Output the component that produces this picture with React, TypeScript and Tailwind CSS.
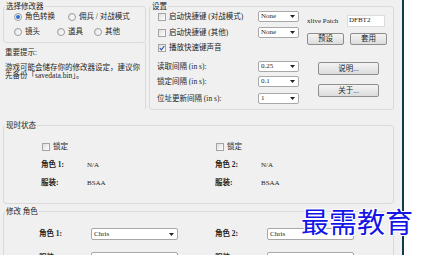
import React from "react";

const Radio = ({ on }: { on?: boolean }) => (
  <span className="w-[8px] h-[8px] rounded-full border border-[#9a9a9a] bg-gradient-to-br from-[#e4e4e4] to-white flex items-center justify-center shrink-0">
    {on && <span className="w-[4px] h-[4px] rounded-full bg-[#2f6fcf]" />}
  </span>
);

const Check = ({ on }: { on?: boolean }) => (
  <span className="w-[8px] h-[8px] border border-[#a4a4a4] bg-gradient-to-br from-[#dedede] to-white flex items-center justify-center shrink-0">
    {on && (
      <svg width="6" height="6" viewBox="0 0 6 6">
        <path d="M0.8 3.2 L2.4 4.8 L5.3 1" stroke="#2a4fa8" strokeWidth="1.1" fill="none" />
      </svg>
    )}
  </span>
);

const Select = ({ value, className }: { value: string; className: string }) => (
  <div className={`h-[11px] bg-white border border-[#a8a8a8] rounded-[2px] flex items-center justify-between pl-[2px] pr-[3px] shrink-0 ${className}`}>
    <span className="text-[7px] leading-none">{value}</span>
    <svg width="5" height="3" viewBox="0 0 5 3">
      <path d="M0 0 H5 L2.5 3 Z" fill="#222" />
    </svg>
  </div>
);

const Btn = ({ children, className }: { children: React.ReactNode; className: string }) => (
  <div className={`border border-[#8e8e8e] rounded-[2px] bg-gradient-to-b from-[#f4f4f4] to-[#dcdcdc] flex items-center justify-center leading-none ${className}`}>
    {children}
  </div>
);

const Group = ({
  title,
  className,
  children,
}: {
  title: string;
  className: string;
  children: React.ReactNode;
}) => (
  <fieldset className={`border border-[#dadada] rounded-[3px] shrink-0 ${className}`}>
    <legend className="ml-[1px] px-[1px] text-[7.5px] leading-[9px]">{title}</legend>
    {children}
  </fieldset>
);

export default function App() {
  return (
    <div className="w-[423px] h-[255px] flex bg-white overflow-hidden relative font-['Liberation_Serif','Noto_Sans_CJK_SC',serif] text-[#1e1e1e] text-[7.5px]">
      <div className="w-[404px] h-full shrink-0 bg-[#f0f0f0] border-r-[2px] border-[#123a4a] pl-[3px] pr-[8px] pt-[2px] flex flex-col overflow-hidden">
        {/* top row */}
        <div className="flex gap-[3px] shrink-0">
          <div className="w-[144px] flex flex-col">
            <Group title="选择修改器" className="h-[41px]">
              <div className="pl-[10px]">
                <div className="flex items-center h-[10px] mt-[1px]">
                  <div className="w-[54px] flex items-center gap-[3px]">
                    <Radio on />
                    <span>角色转换</span>
                  </div>
                  <div className="flex items-center gap-[3px]">
                    <Radio />
                    <span>佣兵 / 对战模式</span>
                  </div>
                </div>
                <div className="flex items-center h-[10px] mt-[5px]">
                  <div className="w-[43px] flex items-center gap-[3px]">
                    <Radio />
                    <span>镜头</span>
                  </div>
                  <div className="w-[37px] flex items-center gap-[3px]">
                    <Radio />
                    <span>道具</span>
                  </div>
                  <div className="flex items-center gap-[3px]">
                    <Radio />
                    <span>其他</span>
                  </div>
                </div>
              </div>
            </Group>
            <div className="border-r border-[#dadada] h-[66px] pl-[2px] pt-[5px]">
              <p className="leading-[9px]">重要提示:</p>
              <p className="leading-[8px] mt-[7px] w-[136px]">
                游戏可能会储存你的修改器设定，建议你先备份「savedata.bin」。
              </p>
            </div>
          </div>

          <Group title="设置" className="w-[245px] h-[108px]">
            <div className="flex pl-[7px]">
              <div className="w-[142px] flex flex-col">
                <div className="flex items-center justify-between h-[11px]">
                  <div className="flex items-center gap-[3px] pl-[1px]">
                    <Check />
                    <span>启动快捷键 (对战模式)</span>
                  </div>
                  <Select value="None" className="w-[41px]" />
                </div>
                <div className="flex items-center justify-between h-[11px] mt-[5px]">
                  <div className="flex items-center gap-[3px] pl-[1px]">
                    <Check />
                    <span>启动快捷键 (其他)</span>
                  </div>
                  <Select value="None" className="w-[41px]" />
                </div>
                <div className="flex items-center h-[11px] mt-[4px]">
                  <div className="flex items-center gap-[3px] pl-[1px]">
                    <Check on />
                    <span>播放快速键声音</span>
                  </div>
                </div>
                <div className="flex items-center justify-between h-[11px] mt-[8px]">
                  <span>读取间隔 (in s):</span>
                  <Select value="0.25" className="w-[41px]" />
                </div>
                <div className="flex items-center justify-between h-[11px] mt-[4px]">
                  <span>锁定间隔 (in s):</span>
                  <Select value="0.1" className="w-[41px]" />
                </div>
                <div className="flex items-center justify-between h-[11px] mt-[6px]">
                  <span>位址更新间隔 (in s):</span>
                  <Select value="1" className="w-[41px]" />
                </div>
              </div>
              <div className="ml-[8px] w-[80px] flex flex-col">
                <div className="flex items-center h-[12px] mt-[4px]">
                  <span className="w-[40px] text-[7px] whitespace-nowrap overflow-hidden">xlive Patch</span>
                  <div className="h-[12px] w-[38px] bg-white border border-[#dcdcdc] text-[7px] leading-none pl-[1px] pt-[1px]">
                    DFBT2
                  </div>
                </div>
                <div className="flex h-[12px] mt-[6px] gap-[6px]">
                  <Btn className="w-[37px] h-[12px]">预设</Btn>
                  <Btn className="w-[37px] h-[12px]">套用</Btn>
                </div>
                <Btn className="w-[61px] h-[13px] mt-[17px] ml-[11px]">说明...</Btn>
                <Btn className="w-[61px] h-[13px] mt-[9px] ml-[11px]">关于...</Btn>
              </div>
            </div>
          </Group>
        </div>

        {/* status */}
        <Group title="现时状态" className="mt-[11px] h-[83px] w-[391px]">
          <div className="flex">
            {[
              { n: "角色 1:", w: "w-[211px]", pl: "pl-[37px]" },
              { n: "角色 2:", w: "w-[170px]", pl: "pl-[0px]" },
            ].map((c) => (
              <div key={c.n} className={`${c.w} ${c.pl} flex flex-col shrink-0`}>
                <div className="flex items-center gap-[3px] h-[10px] mt-[12px] pl-[1px]">
                  <Check />
                  <span>锁定</span>
                </div>
                <div className="flex items-center h-[10px] mt-[8px]">
                  <span className="font-bold w-[46px]">{c.n}</span>
                  <span className="text-[7px]">N/A</span>
                </div>
                <div className="flex items-center h-[10px] mt-[8px]">
                  <span className="font-bold w-[46px]">服装:</span>
                  <span className="text-[7px]">BSAA</span>
                </div>
              </div>
            ))}
          </div>
        </Group>

        {/* edit */}
        <Group title="修改 角色" className="mt-[3px] h-[80px] w-[391px]">
          <div className="flex">
            {[
              { n: "角色 1:", w: "w-[211px]", pl: "pl-[35px]" },
              { n: "角色 2:", w: "w-[170px]", pl: "pl-[0px]" },
            ].map((c) => (
              <div key={c.n} className={`${c.w} ${c.pl} flex flex-col shrink-0`}>
                <div className="flex items-center h-[12px] mt-[12px]">
                  <span className="font-bold w-[52px]">{c.n}</span>
                  <Select value="Chris" className="w-[87px] h-[12px]" />
                </div>
                <div className="flex items-center h-[12px] mt-[12px]">
                  <span className="font-bold w-[52px]">服装:</span>
                  <Select value="" className="w-[87px] h-[12px]" />
                </div>
              </div>
            ))}
          </div>
        </Group>
      </div>

      <div className="absolute left-[301px] top-[203px] text-[28px] leading-[36px] text-[#1414e6] font-['Noto_Sans_CJK_SC',sans-serif] [text-shadow:1px_0_0_#fff,-1px_0_0_#fff,0_1px_0_#fff,0_-1px_0_#fff,1px_1px_0_#fff,-1px_-1px_0_#fff,1px_-1px_0_#fff,-1px_1px_0_#fff]">
        最需教育
      </div>
    </div>
  );
}
